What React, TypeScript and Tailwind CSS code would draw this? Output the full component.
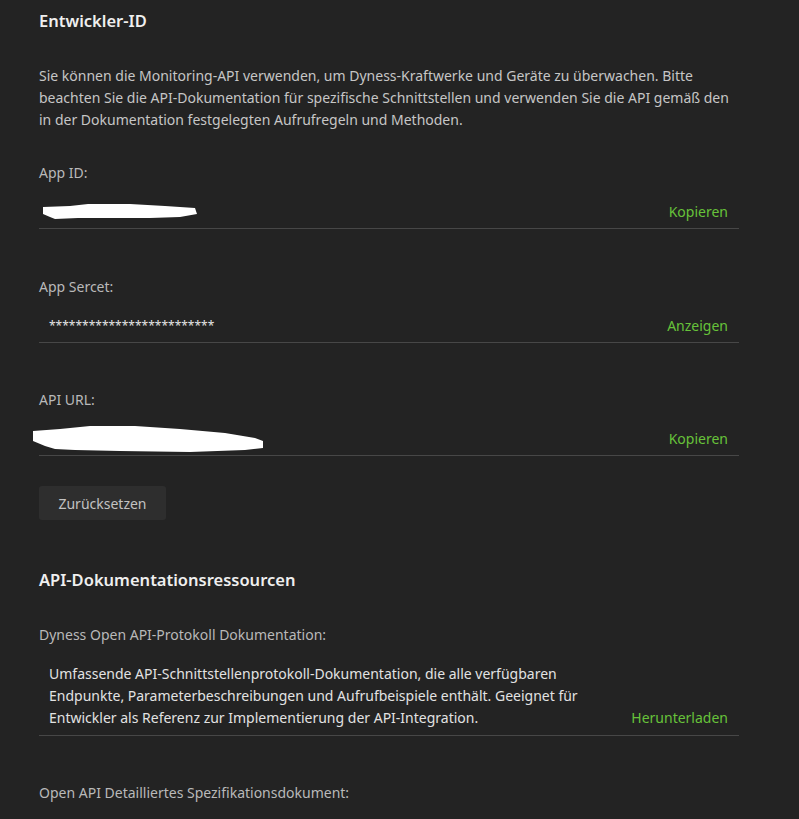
import React from 'react';

function Redacted({ variant }: { variant: 'id' | 'url' }) {
  if (variant === 'id') {
    return (
      <svg width="156" height="18" viewBox="0 0 156 18" className="block -ml-[6px]">
        <polygon
          fill="#ffffff"
          points="0,4 27,3 45,1 87,1 122,3 152,5 154,11 137,14 107,15 35,15 12,16 7,14 0,11"
        />
      </svg>
    );
  }
  return (
    <svg width="232" height="28" viewBox="0 0 232 28" className="block -ml-[16px]">
      <polygon
        fill="#ffffff"
        points="0,6 27,4 57,1 102,1 147,4 192,8 222,13 230,16 230,23 212,25 157,27 87,26 42,25 22,24 12,21 0,16"
      />
    </svg>
  );
}

function FieldRow({ label, action, children }: { label: string; action: string; children: React.ReactNode }) {
  return (
    <div>
      <div className="text-[14px] leading-[22px] text-[#b9b9b9]">{label}</div>
      <div className="mt-[17px] flex items-center justify-between border-b border-[#474747] pb-[5px] pl-[10px] pr-[11px]">
        <div className="h-[22px] flex items-center">{children}</div>
        <button className="text-[14px] leading-[22px] text-[#67c23a]">{action}</button>
      </div>
    </div>
  );
}

export default function App() {
  return (
    <div className="min-h-screen bg-[#232323] font-['Noto_Sans',sans-serif] overflow-hidden">
      <div className="w-[700px] ml-[39px] pt-[9px]">
        <h2 className="text-[16.5px] leading-[24px] font-semibold text-[#efefef]">Entwickler-ID</h2>

        <p className="mt-[32px] text-[14px] leading-[22px] text-[#c6c6c6]">
          Sie können die Monitoring-API verwenden, um Dyness-Kraftwerke und Geräte zu überwachen. Bitte
          beachten Sie die API-Dokumentation für spezifische Schnittstellen und verwenden Sie die API gemäß den
          in der Dokumentation festgelegten Aufrufregeln und Methoden.
        </p>

        <div className="mt-[31px]">
          <FieldRow label="App ID:" action="Kopieren">
            <Redacted variant="id" />
          </FieldRow>
        </div>

        <div className="mt-[47px]">
          <FieldRow label="App Sercet:" action="Anzeigen">
            <span className="text-[12px] text-[#e6e6e6]">*************************</span>
          </FieldRow>
        </div>

        <div className="mt-[46px]">
          <FieldRow label="API URL:" action="Kopieren">
            <Redacted variant="url" />
          </FieldRow>
        </div>

        <button className="mt-[30px] h-[34px] w-[127px] rounded-[3px] bg-[#2e2e2e] text-[14px] text-[#c2c2c2]">
          Zurücksetzen
        </button>

        <h2 className="mt-[48px] text-[16.5px] leading-[24px] font-semibold text-[#efefef]">
          API-Dokumentationsressourcen
        </h2>

        <div className="mt-[32px] text-[14px] leading-[22px] text-[#b9b9b9]">Dyness Open API-Protokoll Dokumentation:</div>
        <div className="mt-[17px] flex items-end justify-between border-b border-[#474747] pb-[6px] pl-[10px] pr-[11px]">
          <p className="w-[540px] text-[14px] leading-[22px] text-[#e2e2e2]">
            Umfassende API-Schnittstellenprotokoll-Dokumentation, die alle verfügbaren Endpunkte,
            Parameterbeschreibungen und Aufrufbeispiele enthält. Geeignet für Entwickler als Referenz zur
            Implementierung der API-Integration.
          </p>
          <button className="text-[14px] leading-[22px] text-[#67c23a]">Herunterladen</button>
        </div>

        <div className="mt-[46px] text-[14px] leading-[22px] text-[#b9b9b9]">
          Open API Detailliertes Spezifikationsdokument:
        </div>
      </div>
    </div>
  );
}
